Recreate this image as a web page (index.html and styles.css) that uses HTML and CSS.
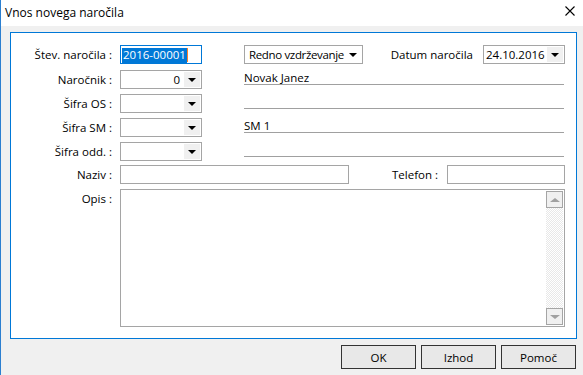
FILE: index.html
```html
<!DOCTYPE html>
<html lang="sl">

<head>
    <meta charset="UTF-8">
    <title>Vnos novega naročila</title>
    <link rel="stylesheet" href="styles.css">
</head>

<body>
    <div class="window">
        <div class="titlebar">
            <span class="title">Vnos novega naročila</span>
            <svg class="close" width="10" height="10" viewBox="0 0 10 10">
                <path d="M0.5 0.5 L9.5 9.5 M9.5 0.5 L0.5 9.5" stroke="#000" stroke-width="1.1" fill="none"/>
            </svg>
        </div>
        <div class="content">
            <div class="panel">
                <!-- stevilka -->
                <div class="row r1">
                    <span class="lbl">Štev. naročila :</span>
                    <div class="edit focus w82"><span class="sel">2016-00001</span><i class="caret"></i></div>
                    <div class="combo redno"><span class="val">Redno vzdrževanje</span><span class="drop"><b></b></span></div>
                    <span class="txt datum">Datum naročila</span>
                    <div class="combo date"><span class="val">24.10.2016</span><span class="drop gray"><b></b></span></div>
                </div>
                <!-- narocnik -->
                <div class="row r2">
                    <span class="lbl">Naročnik :</span>
                    <div class="combo w82"><span class="val num">0</span><span class="drop gray"><b></b></span></div>
                    <div class="line">Novak Janez</div>
                </div>
                <div class="row">
                    <span class="lbl">Šifra OS :</span>
                    <div class="combo w82"><span class="val"></span><span class="drop gray"><b></b></span></div>
                    <div class="line"></div>
                </div>
                <div class="row">
                    <span class="lbl">Šifra SM :</span>
                    <div class="combo w82"><span class="val"></span><span class="drop gray"><b></b></span></div>
                    <div class="line">SM 1</div>
                </div>
                <div class="row r5">
                    <span class="lbl">Šifra odd. :</span>
                    <div class="combo w82"><span class="val"></span><span class="drop gray"><b></b></span></div>
                    <div class="line"></div>
                </div>
                <!-- naziv -->
                <div class="row">
                    <span class="lbl">Naziv :</span>
                    <div class="edit naziv"></div>
                    <span class="txt telefon">Telefon :</span>
                    <div class="edit tel"></div>
                </div>
                <!-- opis -->
                <div class="row opis">
                    <span class="lbl">Opis :</span>
                    <div class="memo">
                        <div class="scroll">
                            <span class="sbtn"><b class="up"></b></span>
                            <span class="track"></span>
                            <span class="sbtn"><b class="down"></b></span>
                        </div>
                    </div>
                </div>
            </div>
            <div class="buttons">
                <button class="btn">OK</button>
                <button class="btn">Izhod</button>
                <button class="btn">Pomoč</button>
            </div>
        </div>
    </div>
</body>

</html>
```

FILE: styles.css
```css
* {
    margin: 0;
    padding: 0;
    box-sizing: border-box;
}

html,
body {
    width: 583px;
    height: 375px;
    overflow: hidden;
    background: #f0f0f0;
    font: 11.5px "Open Sans", "Liberation Sans", Arial, sans-serif;
    color: #000;
}

.window {
    height: 375px;
    border-left: 1px solid #2b7fd0;
}

.titlebar {
    height: 26px;
    background: #fff;
    display: flex;
    align-items: center;
    padding: 0 8px 0 4px;
}

.title {
    flex: 1;
    font-size: 12px;
    margin-top: -1px;
}

.close {
    display: block;
    margin-top: -4px;
}

.content {
    padding: 6px 0 0 9px;
}

.panel {
    width: 567px;
    height: 307px;
    background: #fff;
    border: 1px solid #0078d7;
    padding: 12px 11px 0 0;
    display: flex;
    flex-direction: column;
    gap: 5px;
}

.row {
    display: flex;
    align-items: flex-start;
    height: 19px;
}

.r1 {
    margin-bottom: 1px;
}

.r5 {
    margin-bottom: -1px;
}

.lbl {
    width: 101px;
    margin-right: 8px;
    text-align: right;
    line-height: 19px;
    white-space: nowrap;
}

.txt {
    line-height: 19px;
    white-space: nowrap;
}

.edit,
.combo {
    height: 19px;
    background: #fff;
    border: 1px solid #a5a5a5;
}

.w82 {
    width: 82px;
}

.focus {
    border-color: #0078d7;
    padding: 2px 0 0 1px;
    display: flex;
}

.sel {
    background: #0078d7;
    color: #fff;
    line-height: 14px;
    padding: 0 1px;
}

.caret {
    width: 1px;
    height: 14px;
    background: #ff7f27;
}

.combo {
    display: flex;
    align-items: stretch;
}

.combo .val {
    flex: 1;
    line-height: 17px;
    padding-left: 3px;
    white-space: nowrap;
    overflow: hidden;
}

.combo .num {
    text-align: right;
    padding-right: 4px;
}

.drop {
    width: 16px;
    margin: 1px 1px 1px 0;
    display: flex;
    align-items: center;
    justify-content: center;
}

.drop.gray {
    background: #f0f0f0;
}

.drop b {
    width: 0;
    height: 0;
    border-left: 4px solid transparent;
    border-right: 4px solid transparent;
    border-top: 4px solid #000;
}

.redno {
    width: 119px;
    margin-left: 42px;
}

.redno .val {
    padding-left: 4px;
    letter-spacing: -0.35px;
}

.redno .drop {
    width: 14px;
    margin-right: 2px;
}

.datum {
    margin-left: auto;
    margin-right: 10px;
}

.date {
    width: 82px;
}

.date .val {
    padding-left: 2px;
}

.line {
    width: 320px;
    height: 15px;
    margin-left: 42px;
    border-bottom: 1px solid #a0a0a0;
    line-height: 15px;
}

.naziv {
    width: 229px;
}

.telefon {
    margin-left: auto;
    margin-right: 9px;
}

.tel {
    width: 118px;
}

.opis {
    height: 138px;
}

.memo {
    width: 445px;
    height: 138px;
    border: 1px solid #a5a5a5;
    display: flex;
    justify-content: flex-end;
    padding: 1px;
}

.scroll {
    width: 17px;
    display: flex;
    flex-direction: column;
}

.track {
    flex: 1;
    background: repeating-conic-gradient(#e8e8e8 0 25%, #fff 0 50%) 0 0 / 2px 2px;
}

.sbtn {
    height: 17px;
    background: #f0f0f0;
    border: 1px solid #a5a5a5;
    display: flex;
    align-items: center;
    justify-content: center;
}

.sbtn b {
    width: 0;
    height: 0;
    border-left: 5px solid transparent;
    border-right: 5px solid transparent;
}

.sbtn .up {
    border-bottom: 4px solid #a0a0a0;
}

.sbtn .down {
    border-top: 4px solid #a0a0a0;
}

.buttons {
    width: 567px;
    margin-top: 6px;
    padding-right: 1px;
    display: flex;
    justify-content: flex-end;
    gap: 5px;
}

.btn {
    width: 75px;
    height: 24px;
    background: #e8e8e8;
    border: 1px solid #333;
    font: 11.5px "Open Sans", "Liberation Sans", Arial, sans-serif;
    color: #000;
}
```
